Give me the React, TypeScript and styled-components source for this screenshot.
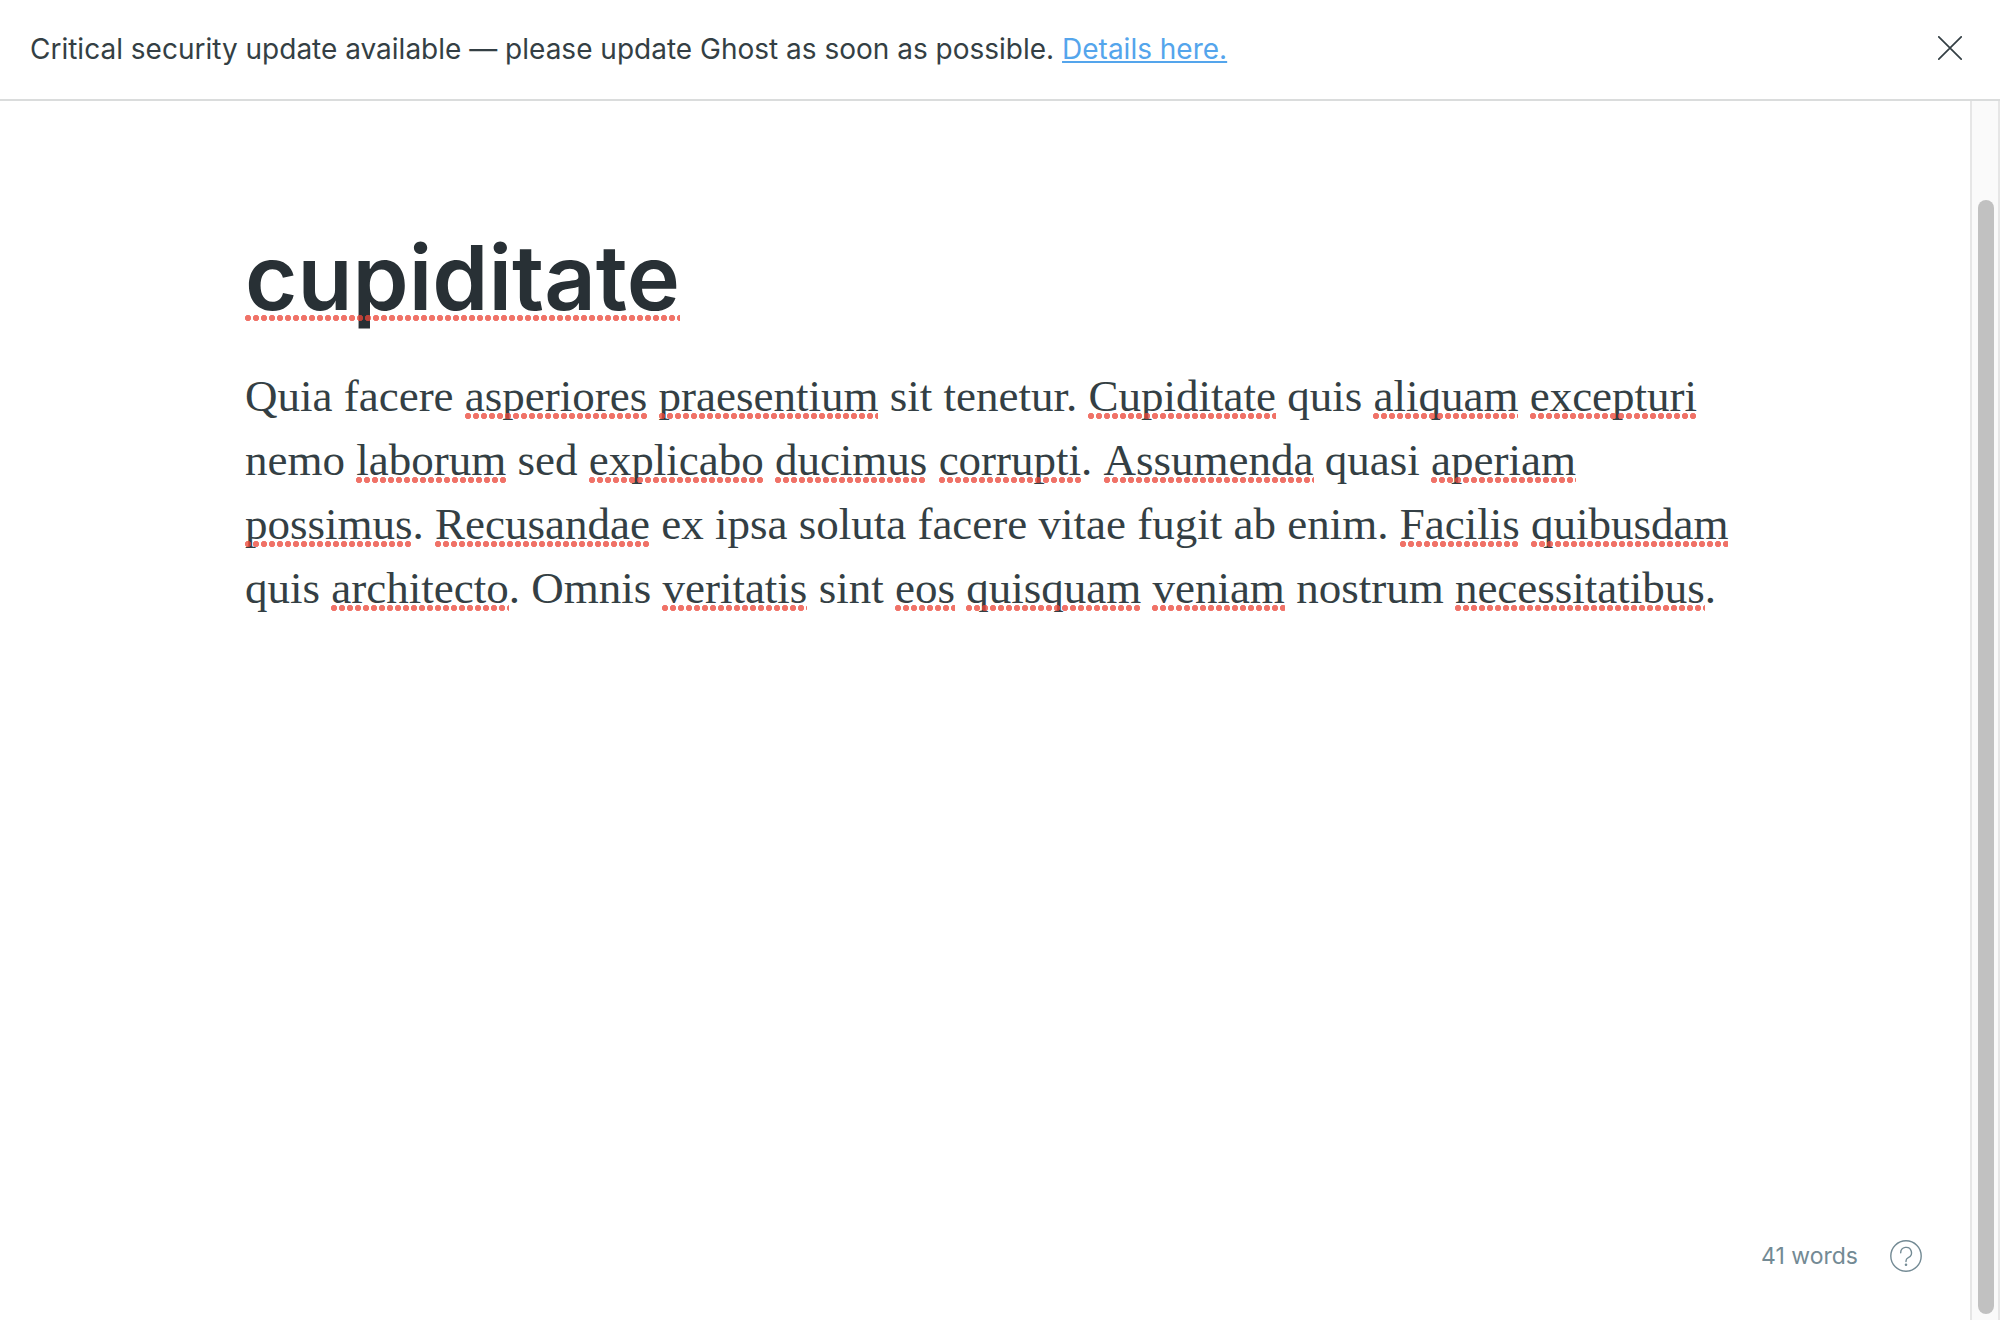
import React from 'react';
import styled, { createGlobalStyle } from 'styled-components';

const GlobalStyle = createGlobalStyle`
  *, *::before, *::after { box-sizing: border-box; }
  body {
    margin: 0;
    background: #fff;
    color: #343f44;
    font-family: Inter, "Liberation Sans", sans-serif;
  }
`;

const Page = styled.div`
  display: flex;
  flex-direction: column;
  height: 100vh;
`;

const Banner = styled.header`
  display: flex;
  align-items: center;
  justify-content: space-between;
  flex: none;
  padding: 29px 30px 30px;
  border-bottom: 2px solid #dadcdc;
`;

const Message = styled.p`
  margin: 0;
  font-size: 28px;
  line-height: 40px;
`;

const DetailsLink = styled.a`
  color: #54a5ec;
  text-decoration: underline;
  text-decoration-thickness: 2px;
  text-underline-offset: 2px;
  text-decoration-skip-ink: none;
`;

const IconButton = styled.button`
  display: flex;
  padding: 0;
  border: 0;
  background: none;
  color: inherit;
  cursor: pointer;
`;

const CloseButton = styled(IconButton)`
  padding: 0 8px 2px;
`;

const Workspace = styled.div`
  display: flex;
  flex: 1;
  min-height: 0;
`;

const Editor = styled.main`
  display: flex;
  flex-direction: column;
  justify-content: space-between;
  flex: 1;
  min-width: 0;
`;

const Article = styled.article`
  width: 100%;
  max-width: 1480px;
  margin: 0 auto;
  padding-top: 121px;
`;

const Title = styled.h1`
  margin: 0;
  color: #283035;
  font-size: 90px;
  font-weight: 600;
  line-height: 112px;
  outline: none;
`;

const Body = styled.p`
  margin: 30px -24px 0 0;
  font-family: Georgia, "Liberation Serif", serif;
  font-size: 45px;
  line-height: 64px;
  outline: none;
`;

const Misspelled = styled.span<{ $top: number }>`
  position: relative;
  display: inline-block;

  &::after {
    content: '';
    position: absolute;
    top: ${(p) => p.$top}px;
    left: 0;
    right: 0;
    height: 6px;
    background: radial-gradient(circle at 3px 3px, rgba(235, 70, 56, 0.76) 2.8px, transparent 3.5px) 0 0 / 8px 6px repeat-x;
  }
`;

const StatusBar = styled.footer`
  display: flex;
  align-items: center;
  justify-content: flex-end;
  gap: 32px;
  padding: 0 48px 48px;
  color: #738a94;
`;

const WordCount = styled.span`
  font-size: 23px;
  line-height: 32px;
`;

const ScrollTrack = styled.div`
  display: flex;
  flex: none;
  width: 30px;
  padding: 99px 4px 6px 6px;
  border: solid #e6e6e6;
  border-width: 0 2px;
  background: #fafafa;
`;

const ScrollThumb = styled.div`
  flex: 1;
  border-radius: 8px;
  background: #c1c1c1;
`;

const LINES = [
  'Quia facere *asperiores *praesentium sit tenetur. *Cupiditate quis *aliquam *excepturi',
  'nemo *laborum sed *explicabo *ducimus *corrupti. *Assumenda quasi *aperiam',
  '*possimus. *Recusandae ex ipsa soluta facere vitae fugit ab enim. *Facilis *quibusdam',
  'quis *architecto. Omnis *veritatis sint *eos *quisquam *veniam nostrum *necessitatibus.',
];

// A leading asterisk flags a word for the spelling underline.
function renderText(text: string) {
  return text.split(/(\*\w+)/).map((part, i) =>
    part.startsWith('*') ? <Misspelled key={i} $top={49}>{part.slice(1)}</Misspelled> : part
  );
}

export default function App() {
  return (
    <>
      <GlobalStyle />
      <Page>
        <Banner>
          <Message>
            Critical security update available — please update Ghost as soon as possible.{' '}
            <DetailsLink href="#details">Details here.</DetailsLink>
          </Message>
          <CloseButton type="button" aria-label="Close notification">
            <svg width="24" height="24" viewBox="0 0 24 24" fill="none" stroke="currentColor" strokeWidth="1.7" strokeLinecap="round">
              <path d="M.8.8l22.4 22.4M23.2.8L.8 23.2" />
            </svg>
          </CloseButton>
        </Banner>
        <Workspace>
          <Editor>
            <Article>
              <Title contentEditable suppressContentEditableWarning spellCheck={false}>
                <Misspelled $top={93}>cupiditate</Misspelled>
              </Title>
              <Body contentEditable suppressContentEditableWarning spellCheck={false}>
                {LINES.map((line, i) => (
                  <React.Fragment key={i}>
                    {i > 0 && <br />}
                    {renderText(line)}
                  </React.Fragment>
                ))}
              </Body>
            </Article>
            <StatusBar>
              <WordCount>41 words</WordCount>
              <IconButton type="button" aria-label="Help">
                <svg width="32" height="32" viewBox="0 0 32 32" fill="none" stroke="currentColor" strokeWidth="1.4" strokeLinecap="round" strokeLinejoin="round">
                  <circle cx="16" cy="16" r="15.2" />
                  <path d="M10.7 12.8a5.4 5.4 0 1 1 7.6 4.9c-1.4.7-2.3 1.6-2.3 3.2v.6" />
                  <circle cx="16" cy="24.7" r=".6" fill="currentColor" />
                </svg>
              </IconButton>
            </StatusBar>
          </Editor>
          <ScrollTrack role="presentation">
            <ScrollThumb />
          </ScrollTrack>
        </Workspace>
      </Page>
    </>
  );
}
